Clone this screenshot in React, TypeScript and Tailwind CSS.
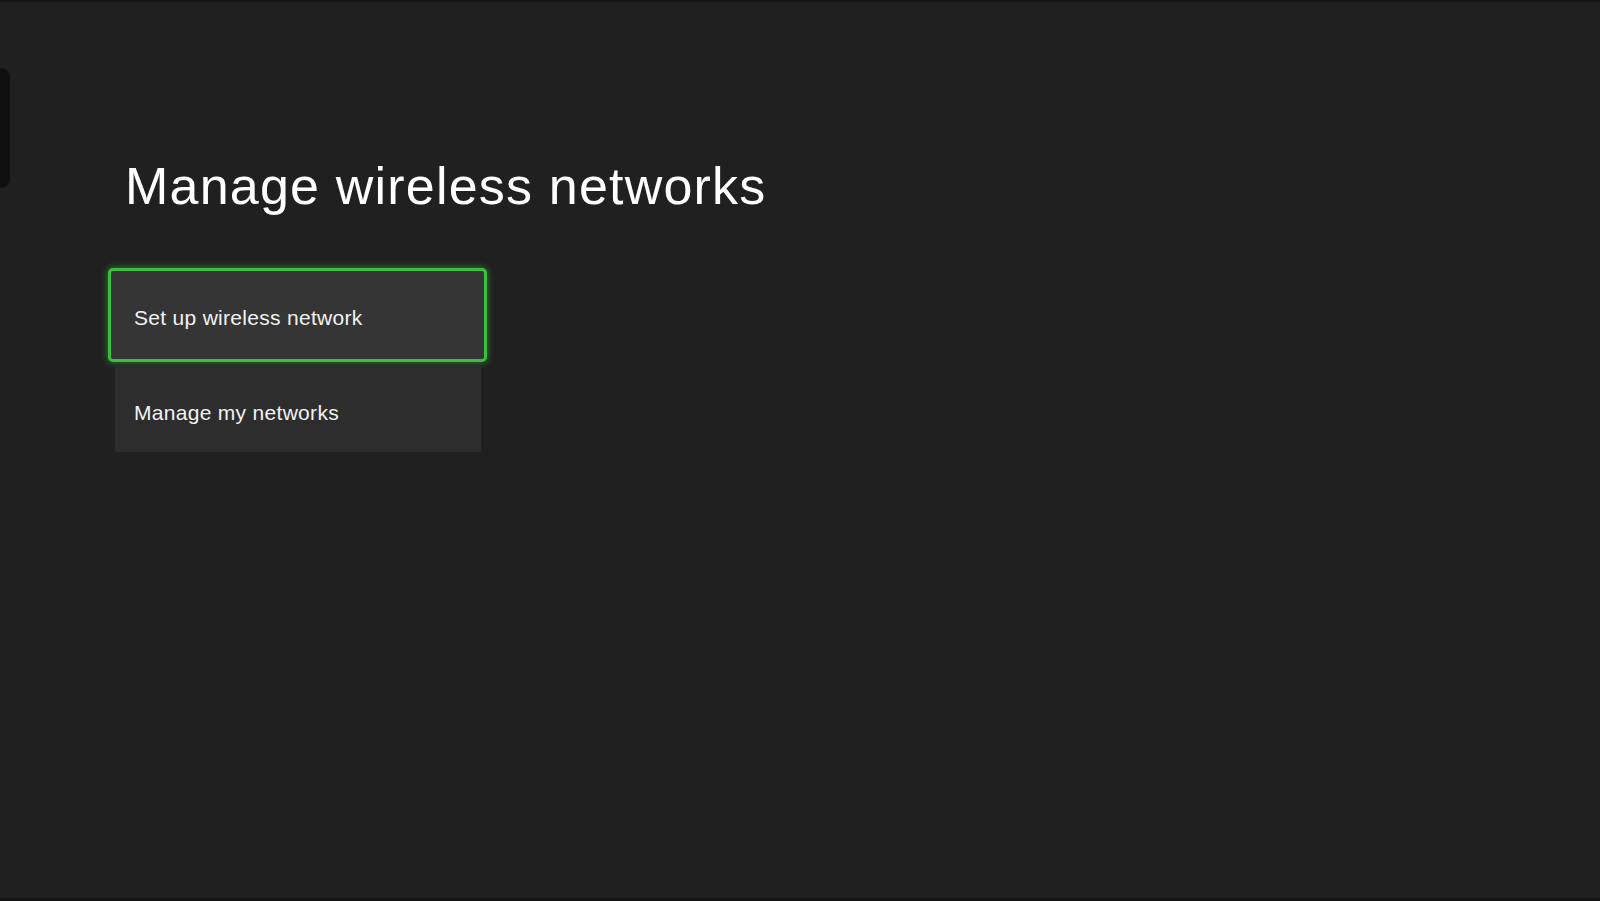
export default function App() {
  const font = { fontFamily: '"Liberation Sans", Arial, sans-serif' };

  return (
    <div
      className="relative w-[1600px] h-[901px] overflow-hidden bg-[#202020] text-[#f2f2f2]"
      style={font}
    >
      {/* edge of a side panel peeking in from the left */}
      <div className="absolute left-[-20px] top-[68px] w-[30px] h-[120px] rounded-[9px] bg-[#0f0f0f]" />

      {/* letterbox lines */}
      <div className="h-[2px] bg-[#151515]" />

      <div className="flex flex-col pt-[158px]">
        <h1 className="ml-[125px] text-[52px] leading-none tracking-[1.2px] font-normal text-white">
          Manage wireless networks
        </h1>

        <div className="mt-[56px] ml-[115px] flex flex-col w-[366px]">
          <button className="-ml-[7px] -mr-[6px] h-[94px] flex items-center pl-[23px] pt-[5px] rounded-[5px] border-[3px] border-[#3fbd3f] bg-[#353535] shadow-[0_0_6px_1px_rgba(60,190,60,0.5)] text-left">
            <span className="text-[21px] leading-none tracking-[0.3px]">Set up wireless network</span>
          </button>
          <button className="mt-[3px] h-[87px] flex items-center pl-[19px] pt-[7px] bg-[#2d2d2d] text-left">
            <span className="text-[21px] leading-none tracking-[0.3px]">Manage my networks</span>
          </button>
        </div>
      </div>

      <div className="absolute bottom-0 left-0 right-0 h-[3px] bg-[#151515]" />
    </div>
  );
}
